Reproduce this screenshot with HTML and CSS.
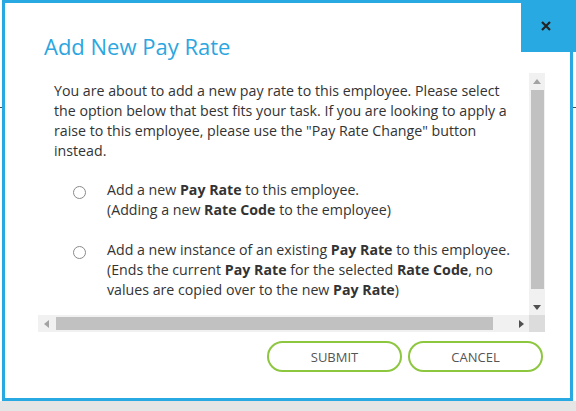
FILE: index.html
```html
<!DOCTYPE html>
<html lang="en">
<head>
    <meta charset="UTF-8">
    <meta name="viewport" content="width=device-width, initial-scale=1.0">
    <title>Add New Pay Rate</title>
    <link rel="stylesheet" href="styles.css">
</head>
<body>
    <div class="page">
        <div class="page-header"></div>
        <div class="page-main"></div>
        <div class="page-footer"></div>
    </div>

    <div class="modal">
        <button class="modal-close" type="button" aria-label="Close">
            <svg width="10" height="10" viewBox="0 0 10 10">
                <path d="M1 1 L9 9 M9 1 L1 9" stroke="#222" stroke-width="2.2" fill="none"/>
            </svg>
        </button>

        <h2 class="modal-title">Add New Pay Rate</h2>

        <div class="scroll-box">
            <div class="scroll-content">
                <p>You are about to add a new pay rate to this employee. Please select<br>the option below that best fits your task. If you are looking to apply a<br>raise to this employee, please use the "Pay Rate Change" button<br>instead.</p>

                <label class="option">
                    <input type="radio" name="rate-type">
                    <span>Add a new <b>Pay Rate</b> to this employee.<br>(Adding a new <b>Rate Code</b> to the employee)</span>
                </label>

                <label class="option">
                    <input type="radio" name="rate-type">
                    <span>Add a new instance of an existing <b>Pay Rate</b> to this employee.<br>(Ends the current <b>Pay Rate</b> for the selected <b>Rate Code</b>, no<br>values are copied over to the new <b>Pay Rate</b>)</span>
                </label>
            </div>

            <div class="vbar">
                <span class="sb-btn">
                    <svg width="8" height="5" viewBox="0 0 8 5"><polygon points="0,5 8,5 4,0" fill="#a3a3a3"/></svg>
                </span>
                <span class="vbar-track"><span class="vbar-thumb"></span></span>
                <span class="sb-btn">
                    <svg width="8" height="5" viewBox="0 0 8 5"><polygon points="0,0 8,0 4,5" fill="#505050"/></svg>
                </span>
            </div>

            <div class="hbar">
                <span class="sb-btn">
                    <svg width="5" height="8" viewBox="0 0 5 8"><polygon points="5,0 5,8 0,4" fill="#a3a3a3"/></svg>
                </span>
                <span class="hbar-track"><span class="hbar-thumb"></span></span>
                <span class="sb-btn">
                    <svg width="5" height="8" viewBox="0 0 5 8"><polygon points="0,0 0,8 5,4" fill="#505050"/></svg>
                </span>
            </div>

            <div class="sb-corner"></div>
        </div>

        <div class="modal-footer">
            <button class="btn" type="button">Submit</button>
            <button class="btn" type="button">Cancel</button>
        </div>
    </div>
</body>
</html>
```

FILE: styles.css
```css
body {
    margin: 0;
    font-family: 'Open Sans', 'Liberation Sans', sans-serif;
    color: #333;
    background-color: #fff;
    height: 411px;
    overflow: hidden;
    position: relative;
}

/* page behind the dialog */
.page {
    display: flex;
    flex-direction: column;
    height: 411px;
}

.page-header {
    height: 108px;
    box-sizing: border-box;
    border-bottom: 1px solid #4d4d4d;
}

.page-main {
    flex: 1;
}

.page-footer {
    height: 10px;
    background-color: #e5e5e5;
}

/* dialog */
.modal {
    position: absolute;
    top: 0;
    left: 2px;
    width: 571px;
    height: 401px;
    box-sizing: border-box;
    border: 3px solid #29a9e1;
    background-color: #fff;
    padding: 28px 25px 0 33px;
}

.modal-close {
    position: absolute;
    top: -3px;
    right: -6px;
    width: 55px;
    height: 52px;
    padding: 0 6px 0 0;
    border: none;
    background-color: #29a9e1;
    display: flex;
    align-items: center;
    justify-content: center;
    cursor: pointer;
}

.modal-title {
    margin: 0 0 12px 6px;
    font-size: 22px;
    font-weight: 400;
    line-height: 30px;
    color: #2ba6df;
}

/* scroll area */
.scroll-box {
    display: grid;
    grid-template-columns: 491px 16px;
    grid-template-rows: 242px 17px;
}

.scroll-content {
    overflow: hidden;
    white-space: nowrap;
    padding: 8px 0 0 16px;
    font-size: 14.2px;
    line-height: 20px;
}

.scroll-content p {
    margin: 0 0 19px;
}

.scroll-content b {
    font-weight: 700;
}

.option {
    display: flex;
    align-items: flex-start;
    margin: 0 0 20px 19px;
}

.option input {
    appearance: none;
    -webkit-appearance: none;
    flex: none;
    width: 13px;
    height: 13px;
    margin: 6px 21px 0 0;
    border: 1px solid #8a8a8a;
    border-radius: 50%;
    background-color: #fff;
    box-sizing: border-box;
}

.vbar {
    display: flex;
    flex-direction: column;
    background-color: #f1f1f1;
}

.hbar {
    display: flex;
    background-color: #f1f1f1;
}

.sb-btn {
    flex: none;
    width: 16px;
    height: 16px;
    display: flex;
    align-items: center;
    justify-content: center;
}

.hbar .sb-btn {
    height: 17px;
}

.vbar-track {
    flex: 1;
}

.vbar-thumb {
    display: block;
    height: 199px;
    margin: 1px 1px 0 2px;
    background-color: #c1c1c1;
}

.hbar-track {
    flex: 1;
}

.hbar-thumb {
    display: block;
    width: 437px;
    height: 13px;
    margin: 2px 0 0 2px;
    background-color: #c1c1c1;
}

.sb-corner {
    background-color: #dcdcdc;
}

/* footer buttons */
.modal-footer {
    display: flex;
    justify-content: flex-end;
    gap: 6px;
    margin-top: 9px;
    padding-right: 2px;
}

.btn {
    width: 135px;
    height: 31px;
    padding: 0;
    border: 2px solid #8dc63f;
    border-radius: 16px;
    background-color: #fff;
    font-family: 'Open Sans', 'Liberation Sans', sans-serif;
    font-size: 13px;
    color: #555;
    text-transform: uppercase;
    cursor: pointer;
}
```
